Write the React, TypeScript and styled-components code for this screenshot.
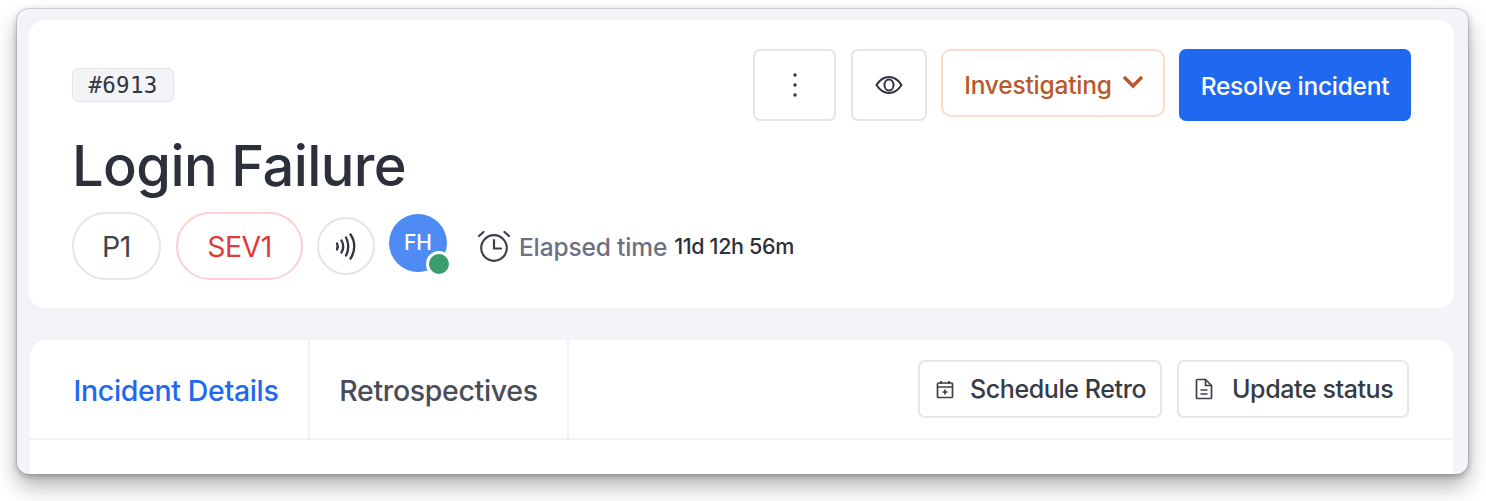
import React from "react";
import styled, { createGlobalStyle } from "styled-components";

const Global = createGlobalStyle`
  html, body { margin: 0; padding: 0; background: #fff; }
  body { font-family: Inter, "Liberation Sans", sans-serif; width: 1486px; height: 501px; overflow: hidden; }
  * { box-sizing: border-box; }
`;

const Frame = styled.div`
  margin: 9px 0 0 17px;
  width: 1451px;
  height: 465px;
  padding: 11px 14px 0 12px;
  background: #f3f4f8;
  border-radius: 12px;
  box-shadow: 0 0 0 1px rgba(150,152,160,.35), 0 12px 22px rgba(0,0,0,.3), 0 2px 6px rgba(0,0,0,.25);
  overflow: hidden;
  display: flex;
  flex-direction: column;
`;

const HeaderCard = styled.section`
  background: #fff;
  border-radius: 16px;
  height: 288px;
  padding: 29px 43px 0;
  display: flex;
  flex-direction: column;
`;

const TopRow = styled.div`
  display: flex;
  justify-content: space-between;
  align-items: flex-start;
  height: 72px;
`;

const IdBadge = styled.span`
  margin-top: 19px;
  width: 102px;
  height: 34px;
  display: flex;
  align-items: center;
  justify-content: center;
  background: #f3f4f7;
  border: 1.5px solid #e3e4e8;
  border-radius: 6px;
  font-family: "DejaVu Sans Mono", "Liberation Mono", monospace;
  font-size: 22.5px;
  letter-spacing: .3px;
  color: #32363f;
`;

const Actions = styled.div`
  display: flex;
  align-items: flex-start;
  gap: 15px;
`;

const IconButton = styled.button<{ $w: number }>`
  width: ${p => p.$w}px;
  height: 72px;
  background: #fff;
  border: 2px solid #e4e5e8;
  border-radius: 7px;
  display: flex;
  align-items: center;
  justify-content: center;
  padding: 0;
  color: #30343c;
`;

const StatusButton = styled.button`
  width: 224px;
  height: 68px;
  margin-left: -1px;
  background: #fff;
  border: 2px solid #fcdcc8;
  border-radius: 10px;
  display: flex;
  align-items: center;
  justify-content: center;
  gap: 10px;
  padding: 4px 0 0 2px;
  font: 500 24.5px Inter, sans-serif;
  letter-spacing: -.2px;
  color: #b9582a;
`;

const PrimaryButton = styled.button`
  width: 232px;
  height: 72px;
  margin-left: -1px;
  background: #1f69f0;
  border: 0;
  border-radius: 7px;
  padding: 2px 0 0;
  font: 500 24.5px Inter, sans-serif;
  letter-spacing: -.25px;
  color: #fff;
`;

const Title = styled.h1`
  margin: 15px 0 0;
  font-size: 56px;
  line-height: 60px;
  font-weight: 500;
  letter-spacing: -.6px;
  color: #2b303a;
`;

const MetaRow = styled.div`
  margin-top: 16px;
  display: flex;
  align-items: center;
  height: 68px;
`;

const Pill = styled.span<{ $w: number; $red?: boolean }>`
  width: ${p => p.$w}px;
  height: 68px;
  margin-right: 15px;
  border-radius: 34px;
  border: 2px solid ${p => (p.$red ? "#fbd0d0" : "#e4e5e8")};
  color: ${p => (p.$red ? "#e03a3a" : "#3f434c")};
  font-size: 28.5px;
  font-weight: 400;
  letter-spacing: -.5px;
  display: flex;
  align-items: center;
  justify-content: center;
`;

const RoundIcon = styled.span`
  width: 58px;
  height: 58px;
  margin: 0 14px 0 -1px;
  border: 2px solid #e4e5e8;
  border-radius: 50%;
  display: flex;
  align-items: center;
  justify-content: center;
  color: #30343c;
`;

const Avatar = styled.span`
  position: relative;
  width: 58px;
  height: 58px;
  margin: -6px 30px 0 0;
  padding-bottom: 2px;
  border-radius: 50%;
  background: #4f8bf5;
  color: #fff;
  font-size: 21px;
  font-weight: 500;
  display: flex;
  align-items: center;
  justify-content: center;
`;

const OnlineDot = styled.span`
  position: absolute;
  right: -5px;
  bottom: -5px;
  width: 26px;
  height: 26px;
  border-radius: 50%;
  background: #3a9c6c;
  border: 3.5px solid #fff;
`;

const Elapsed = styled.div`
  display: flex;
  align-items: center;
  margin-top: -1px;
`;

const ElapsedLabel = styled.span`
  margin: 3px 0 0 8px;
  font-size: 24.5px;
  font-weight: 500;
  letter-spacing: -.15px;
  color: #6c7080;
`;

const ElapsedValue = styled.span`
  margin: 1px 0 0 7px;
  font-size: 21.5px;
  font-weight: 500;
  letter-spacing: -.35px;
  color: #2c3038;
`;

const TabsCard = styled.section`
  margin: 32px 1px 0;
  flex: 1;
  background: #fff;
  border-radius: 16px 16px 0 0;
`;

const TabBar = styled.div`
  height: 100px;
  border-bottom: 2px solid #f0f1f3;
  display: flex;
  align-items: stretch;
`;

const Tab = styled.div<{ $w: number; $active?: boolean }>`
  width: ${p => p.$w}px;
  border-right: 2px solid #f1f2f5;
  padding: 2px 0 0 ${p => (p.$active ? 14 : 0)}px;
  display: flex;
  align-items: center;
  justify-content: center;
  font-size: 28.5px;
  font-weight: 500;
  letter-spacing: -.35px;
  color: ${p => (p.$active ? "#1f69f0" : "#4a4d57")};
`;

const TabActions = styled.div`
  margin-left: auto;
  padding: 20px 44px 0 0;
  display: flex;
  gap: 15px;
  align-items: flex-start;
`;

const GhostButton = styled.button<{ $w: number; $gap: number }>`
  width: ${p => p.$w}px;
  height: 58px;
  background: #fff;
  border: 2px solid #e6e7ea;
  border-radius: 7px;
  display: flex;
  align-items: center;
  padding: 0 0 0 16px;
  gap: ${p => p.$gap}px;
  font: 500 25px Inter, sans-serif;
  letter-spacing: -.4px;
  color: #363a44;
`;

const Eye = () => (
  <svg width="28" height="20" viewBox="0 0 28 20" fill="none" stroke="currentColor" strokeWidth="2">
    <path d="M1.500 10C5 4.500 9 2 14 2s9 2.500 12.500 8C23 15.500 19 18 14 18S5 15.500 1.500 10Z" />
    <ellipse cx="14" cy="10" rx="4.500" ry="5.500" />
  </svg>
);

const Dots = () => (
  <svg width="6" height="26" viewBox="0 0 6 26" fill="currentColor">
    <circle cx="3" cy="3" r="1.700" />
    <circle cx="3" cy="13" r="1.700" />
    <circle cx="3" cy="23" r="1.700" />
  </svg>
);

const Chevron = () => (
  <svg width="22" height="14" viewBox="0 0 22 14" fill="none" stroke="currentColor" strokeWidth="3.400" style={{ marginTop: -7 }}>
    <path d="M2 2l9 9 9-9" />
  </svg>
);

const Nfc = () => (
  <svg width="22" height="27" viewBox="0 0 22 27" fill="none" stroke="currentColor" strokeWidth="2.300" strokeLinecap="round">
    <path d="M2 10.500c1 2 1 4 0 6" />
    <path d="M6.500 7.500c2 3.500 2 8.500 0 12" />
    <path d="M11 4.500c3 5 3 13 0 18" />
    <path d="M15.500 1.500c5 7 5 17 0 24" />
  </svg>
);

const Alarm = () => (
  <svg width="34" height="32" viewBox="0 0 34 32" fill="none" stroke="#3c4048" strokeWidth="2.200" strokeLinecap="round">
    <circle cx="17" cy="18" r="12.800" />
    <path d="M17 10v8.500h7" />
    <path d="M2 6l4.500-4" />
    <path d="M32 6l-4.500-4" />
  </svg>
);

const CalendarPlus = () => (
  <svg width="18" height="19" viewBox="0 0 18 19" fill="none" stroke="#3c4048" strokeWidth="1.700">
    <rect x="1.500" y="3" width="15" height="14.500" rx="1" />
    <path d="M1.500 7h15M5 1v3M13 1v3M9 9.500v5M6.500 12h5" />
  </svg>
);

const FileIcon = () => (
  <svg width="18" height="22" viewBox="0 0 18 22" fill="none" stroke="#3c4048" strokeWidth="1.700">
    <path d="M2.500 1.500h8l6 6v12a1 1 0 0 1-1 1h-13a1 1 0 0 1-1-1v-17a1 1 0 0 1 1-1Z" />
    <path d="M10.500 1.500v6h6M5.500 12h7M5.500 16h7" />
  </svg>
);

export default function App() {
  return (
    <>
      <Global />
      <Frame>
        <HeaderCard>
          <TopRow>
            <IdBadge>#6913</IdBadge>
            <Actions>
              <IconButton $w={83}><Dots /></IconButton>
              <IconButton $w={76}><Eye /></IconButton>
              <StatusButton>Investigating <Chevron /></StatusButton>
              <PrimaryButton>Resolve incident</PrimaryButton>
            </Actions>
          </TopRow>
          <Title>Login Failure</Title>
          <MetaRow>
            <Pill $w={89}>P1</Pill>
            <Pill $w={127} $red>SEV1</Pill>
            <RoundIcon><Nfc /></RoundIcon>
            <Avatar>FH<OnlineDot /></Avatar>
            <Elapsed>
              <Alarm />
              <ElapsedLabel>Elapsed time</ElapsedLabel>
              <ElapsedValue>11d 12h 56m</ElapsedValue>
            </Elapsed>
          </MetaRow>
        </HeaderCard>
        <TabsCard>
          <TabBar>
            <Tab $w={280} $active>Incident Details</Tab>
            <Tab $w={259}>Retrospectives</Tab>
            <TabActions>
              <GhostButton $w={244} $gap={16}><CalendarPlus />Schedule Retro</GhostButton>
              <GhostButton $w={232} $gap={19}><FileIcon />Update status</GhostButton>
            </TabActions>
          </TabBar>
        </TabsCard>
      </Frame>
    </>
  );
}
